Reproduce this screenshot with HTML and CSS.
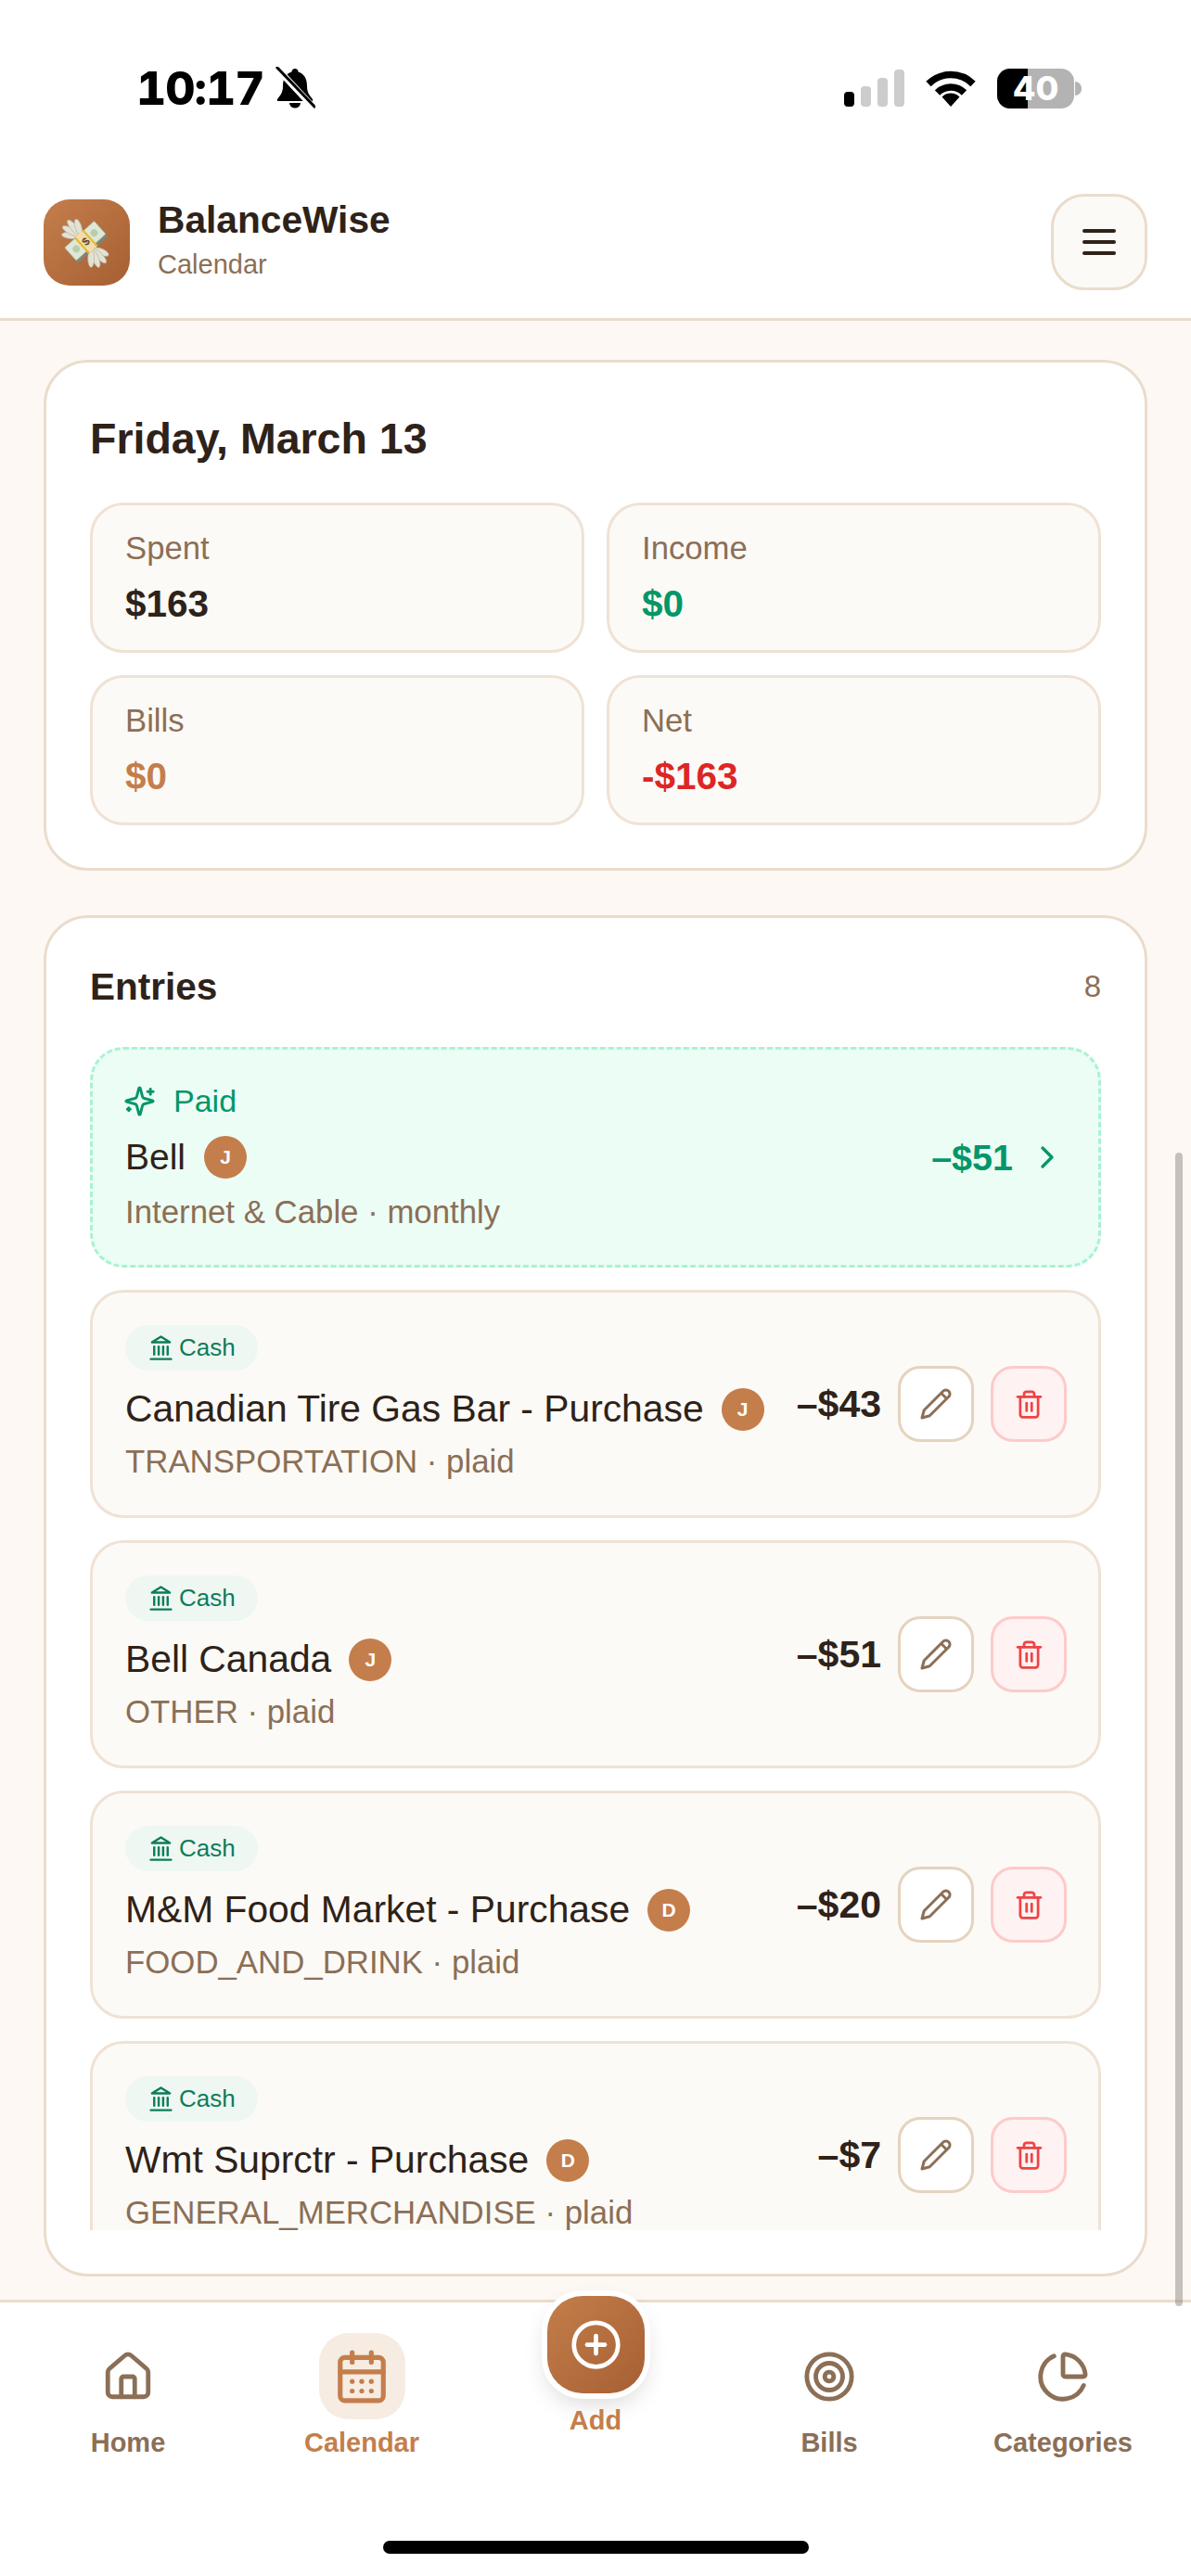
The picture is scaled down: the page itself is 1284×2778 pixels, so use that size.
FILE: index.html
```html
<!DOCTYPE html>
<html lang="en">
<head>
  <meta charset="UTF-8" />
  <meta name="viewport" content="width=device-width, initial-scale=1.0"/>
  <title>BalanceWise Calendar</title>
  <link rel="stylesheet" href="styles.css">
</head>
<body>
  <svg class="defs" width="0" height="0" aria-hidden="true">
    <symbol id="i-bank" viewBox="0 0 24 24">
      <line x1="3" y1="22" x2="21" y2="22"/>
      <line x1="6" y1="18" x2="6" y2="11"/>
      <line x1="10" y1="18" x2="10" y2="11"/>
      <line x1="14" y1="18" x2="14" y2="11"/>
      <line x1="18" y1="18" x2="18" y2="11"/>
      <polygon points="12 2 20 7 4 7"/>
    </symbol>
    <symbol id="i-pencil" viewBox="0 0 24 24">
      <path d="M17 3a2.85 2.83 0 1 1 4 4L7.5 20.5 2 22l1.5-5.5Z"/>
      <path d="m16 4.500 3.500 3.500"/>
    </symbol>
    <symbol id="i-trash" viewBox="0 0 24 24">
      <path d="M3 6h18"/>
      <path d="M19 6v14a2 2 0 0 1-2 2H7a2 2 0 0 1-2-2V6"/>
      <path d="M8 6V4a2 2 0 0 1 2-2h4a2 2 0 0 1 2 2v2"/>
      <line x1="10" y1="11" x2="10" y2="17"/>
      <line x1="14" y1="11" x2="14" y2="17"/>
    </symbol>
  </svg>

  <div class="app">
    <div class="status">
      <div class="status-left">
        <span class="time">10:17</span>
        <svg class="bell" viewBox="0 0 44 46">
          <path d="M22 2c-2 0-3.500 1.500-3.500 3.500C11 8 9 14 9 21c0 7-3 10-6 14v2h38v-2c-3-4-6-7-6-14 0-7-2-13-9.500-15.500C25.500 3.500 24 2 22 2z"/>
          <path d="M16 39h12a6 5.500 0 0 1-12 0z"/>
          <line class="slash-gap" x1="1" y1="0" x2="43" y2="45"/>
          <line class="slash" x1="2" y1="0" x2="44" y2="44"/>
        </svg>
      </div>
      <div class="status-right">
        <div class="signal">
          <i class="on bar1"></i><i class="bar2"></i><i class="bar3"></i><i class="bar4"></i>
        </div>
        <svg class="wifi" viewBox="0 0 56 40">
          <path d="M4 15.500a34 34 0 0 1 48 0"/>
          <path d="M13.500 25a20.500 20.500 0 0 1 29 0"/>
          <path class="wifi-dot" d="M18.500 29.500a13.500 13.500 0 0 1 19 0L28 40z"/>
        </svg>
        <div class="battery"><span class="battery-fill"></span><span class="battery-num">40</span></div>
        <span class="battery-tip"></span>
      </div>
    </div>

    <header class="topbar">
      <div class="brand">
        <div class="logo">
          <svg viewBox="0 0 93 93" width="93" height="93">
            <g transform="translate(46 46) scale(0.86) rotate(-42) translate(-45 -45)">
              <g class="feathers">
                <ellipse cx="45" cy="22" rx="4" ry="11" transform="rotate(-42 45 36)"/>
                <ellipse cx="45" cy="21" rx="4" ry="12" transform="rotate(-20 45 36)"/>
                <ellipse cx="45" cy="21" rx="4" ry="12" transform="rotate(2 45 36)"/>
                <ellipse cx="45" cy="23" rx="4" ry="10" transform="rotate(24 45 36)"/>
                <ellipse cx="45" cy="68" rx="4" ry="10" transform="rotate(-24 45 54)"/>
                <ellipse cx="45" cy="69" rx="4" ry="12" transform="rotate(-2 45 54)"/>
                <ellipse cx="45" cy="69" rx="4" ry="12" transform="rotate(20 45 54)"/>
                <ellipse cx="45" cy="68" rx="4" ry="11" transform="rotate(42 45 54)"/>
              </g>
              <rect x="20" y="35" width="50" height="23" rx="1.500" fill="#7f8478"/>
              <rect x="20" y="32" width="50" height="22" rx="1.500" fill="#dfe8d4" stroke="#9aa890" stroke-width="1"/>
              <circle cx="30" cy="43" r="4.500" fill="#b9cdb0"/>
              <circle cx="60" cy="43" r="4.500" fill="#b9cdb0"/>
              <rect x="37" y="31" width="16" height="27" fill="#e8b92f"/>
              <rect x="39.500" y="31" width="11" height="27" fill="#f1ddb0"/>
              <text class="logo-dollar" x="45" y="49">$</text>
            </g>
          </svg>
        </div>
        <div class="brand-text">
          <div class="brand-name">BalanceWise</div>
          <div class="brand-page">Calendar</div>
        </div>
      </div>
      <button class="menu-btn">
        <svg class="line-icon" viewBox="0 0 24 24" width="48" height="48">
          <line x1="4" y1="6" x2="20" y2="6"/>
          <line x1="4" y1="12" x2="20" y2="12"/>
          <line x1="4" y1="18" x2="20" y2="18"/>
        </svg>
      </button>
    </header>

    <main class="content">
      <section class="card day-card">
        <h2 class="day-title">Friday, March 13</h2>
        <div class="stats">
          <div class="stat"><div class="stat-label">Spent</div><div class="stat-value">$163</div></div>
          <div class="stat"><div class="stat-label">Income</div><div class="stat-value green">$0</div></div>
          <div class="stat"><div class="stat-label">Bills</div><div class="stat-value accent">$0</div></div>
          <div class="stat"><div class="stat-label">Net</div><div class="stat-value red">-$163</div></div>
        </div>
      </section>

      <section class="card entries-card">
        <div class="entries-head">
          <h3 class="entries-title">Entries</h3>
          <span class="entries-count">8</span>
        </div>
        <div class="entries-list">
          <div class="entry paid">
            <div class="entry-info">
              <div class="paid-tag">
                <svg class="line-icon" viewBox="0 0 24 24" width="35" height="35">
                  <path d="M9.937 15.500A2 2 0 0 0 8.500 14.063l-6.135-1.582a.500.500 0 0 1 0-.962L8.500 9.936A2 2 0 0 0 9.937 8.500l1.582-6.135a.500.500 0 0 1 .963 0L14.063 8.500A2 2 0 0 0 15.500 9.937l6.135 1.581a.500.500 0 0 1 0 .964L15.500 14.063a2 2 0 0 0-1.437 1.437l-1.582 6.135a.500.500 0 0 1-.963 0z"/>
                  <path d="M20 3v4"/><path d="M22 5h-4"/><path d="M4 17v2"/><path d="M5 18H3"/>
                </svg>
                Paid
              </div>
              <div class="entry-name">Bell <span class="avatar">J</span></div>
              <div class="entry-sub">Internet &amp; Cable · monthly</div>
            </div>
            <div class="entry-amount green">–$51</div>
            <svg class="line-icon chevron" viewBox="0 0 24 24" width="40" height="40"><path d="m9 18 6-6-6-6"/></svg>
          </div>

          <div class="entry">
            <div class="entry-info">
              <span class="pill"><svg class="line-icon" width="29" height="29"><use href="#i-bank"/></svg>Cash</span>
              <div class="entry-name">Canadian Tire Gas Bar - Purchase <span class="avatar">J</span></div>
              <div class="entry-sub">TRANSPORTATION · plaid</div>
            </div>
            <div class="entry-amount">–$43</div>
            <button class="act-btn"><svg class="line-icon" width="36" height="36"><use href="#i-pencil"/></svg></button>
            <button class="act-btn danger"><svg class="line-icon" width="33" height="33"><use href="#i-trash"/></svg></button>
          </div>

          <div class="entry">
            <div class="entry-info">
              <span class="pill"><svg class="line-icon" width="29" height="29"><use href="#i-bank"/></svg>Cash</span>
              <div class="entry-name">Bell Canada <span class="avatar">J</span></div>
              <div class="entry-sub">OTHER · plaid</div>
            </div>
            <div class="entry-amount">–$51</div>
            <button class="act-btn"><svg class="line-icon" width="36" height="36"><use href="#i-pencil"/></svg></button>
            <button class="act-btn danger"><svg class="line-icon" width="33" height="33"><use href="#i-trash"/></svg></button>
          </div>

          <div class="entry">
            <div class="entry-info">
              <span class="pill"><svg class="line-icon" width="29" height="29"><use href="#i-bank"/></svg>Cash</span>
              <div class="entry-name">M&amp;M Food Market - Purchase <span class="avatar">D</span></div>
              <div class="entry-sub">FOOD_AND_DRINK · plaid</div>
            </div>
            <div class="entry-amount">–$20</div>
            <button class="act-btn"><svg class="line-icon" width="36" height="36"><use href="#i-pencil"/></svg></button>
            <button class="act-btn danger"><svg class="line-icon" width="33" height="33"><use href="#i-trash"/></svg></button>
          </div>

          <div class="entry">
            <div class="entry-info">
              <span class="pill"><svg class="line-icon" width="29" height="29"><use href="#i-bank"/></svg>Cash</span>
              <div class="entry-name">Wmt Suprctr - Purchase <span class="avatar">D</span></div>
              <div class="entry-sub">GENERAL_MERCHANDISE · plaid</div>
            </div>
            <div class="entry-amount">–$7</div>
            <button class="act-btn"><svg class="line-icon" width="36" height="36"><use href="#i-pencil"/></svg></button>
            <button class="act-btn danger"><svg class="line-icon" width="33" height="33"><use href="#i-trash"/></svg></button>
          </div>
        </div>
      </section>
    </main>

    <nav class="tabbar">
      <a class="tab">
        <span class="tab-icon">
          <svg class="line-icon" viewBox="0 0 24 24" width="58" height="58">
            <path d="M15 21v-8a1 1 0 0 0-1-1h-4a1 1 0 0 0-1 1v8"/>
            <path d="M3 10a2 2 0 0 1 .709-1.528l7-5.999a2 2 0 0 1 2.582 0l7 5.999A2 2 0 0 1 21 10v9a2 2 0 0 1-2 2H5a2 2 0 0 1-2-2z"/>
          </svg>
        </span>
        Home
      </a>
      <a class="tab active">
        <span class="tab-icon">
          <svg class="line-icon" viewBox="0 0 24 24" width="62" height="62">
            <path d="M8 2v4"/><path d="M16 2v4"/>
            <rect width="18" height="18" x="3" y="4" rx="2"/>
            <path d="M3 10h18"/>
            <path d="M8 14h.01"/><path d="M12 14h.01"/><path d="M16 14h.01"/>
            <path d="M8 18h.01"/><path d="M12 18h.01"/><path d="M16 18h.01"/>
          </svg>
        </span>
        Calendar
      </a>
      <a class="tab add">
        <span class="add-btn">
          <svg class="line-icon" viewBox="0 0 24 24" width="57" height="57">
            <circle cx="12" cy="12" r="10"/>
            <path d="M8 12h8"/><path d="M12 8v8"/>
          </svg>
        </span>
        Add
      </a>
      <a class="tab">
        <span class="tab-icon">
          <svg class="line-icon" viewBox="0 0 24 24" width="58" height="58">
            <circle cx="12" cy="12" r="10"/>
            <circle cx="12" cy="12" r="6"/>
            <circle cx="12" cy="12" r="2"/>
          </svg>
        </span>
        Bills
      </a>
      <a class="tab">
        <span class="tab-icon">
          <svg class="line-icon" viewBox="0 0 24 24" width="58" height="58">
            <path d="M21 12c.552 0 1.005-.449.950-.998a10 10 0 0 0-8.953-8.951c-.550-.055-.998.398-.998.950v8a1 1 0 0 0 1 1z"/>
            <path d="M21.210 15.890A10 10 0 1 1 8 2.830"/>
          </svg>
        </span>
        Categories
      </a>
    </nav>

    <div class="home-bar"></div>
    <div class="scroll-thumb"></div>
  </div>
</body>
</html>
```

FILE: styles.css
```css
* {
  box-sizing: border-box;
}

body {
  margin: 0;
  font-family: "Liberation Sans", Arial, sans-serif;
  color: #2e2219;
  background: #fff;
}

h2, h3 {
  margin: 0;
}

.defs {
  position: absolute;
}

.app {
  position: relative;
  display: flex;
  flex-direction: column;
  height: 100vh;
  overflow: hidden;
}

.line-icon {
  fill: none;
  stroke: currentColor;
  stroke-width: 2;
  stroke-linecap: round;
  stroke-linejoin: round;
  flex: none;
}

.green { color: #059669; }
.accent { color: #c47e4b; }
.red { color: #dc2626; }

/* status bar */
.status {
  flex: none;
  height: 190px;
  padding: 0 118px 0 147px;
  display: flex;
  justify-content: space-between;
  align-items: center;
}

.status-left, .status-right {
  display: flex;
  align-items: center;
}

.time {
  font-family: Inter, sans-serif;
  font-weight: 800;
  font-size: 50px;
  font-variant-numeric: tabular-nums;
  letter-spacing: -1px;
  color: #000;
}

.bell {
  width: 44px;
  height: 46px;
  margin-left: 11px;
  fill: #000;
}

.slash-gap {
  stroke: #fff;
  stroke-width: 7;
}

.slash {
  stroke: #000;
  stroke-width: 3;
}

.signal {
  display: flex;
  align-items: flex-end;
  gap: 7px;
  height: 40px;
}

.signal i {
  width: 11px;
  border-radius: 4px;
  background: #ccc;
}

.signal .on { background: #000; }
.bar1 { height: 16px; }
.bar2 { height: 22px; }
.bar3 { height: 31px; }
.bar4 { height: 40px; }

.wifi {
  width: 56px;
  height: 40px;
  margin-left: 22px;
  fill: none;
  stroke: #000;
  stroke-width: 7.5;
}

.wifi-dot {
  fill: #000;
  stroke: none;
}

.battery {
  position: relative;
  width: 83px;
  height: 43px;
  margin-left: 22px;
  border-radius: 14px;
  background: #b3b3b3;
  overflow: hidden;
  text-align: center;
}

.battery-fill {
  position: absolute;
  left: 0;
  top: 0;
  bottom: 0;
  width: 33px;
  background: #000;
}

.battery-num {
  position: relative;
  font-family: Inter, sans-serif;
  font-weight: 800;
  font-size: 36px;
  line-height: 43px;
  color: #fff;
}

.battery-tip {
  width: 7px;
  height: 15px;
  margin-left: 1px;
  border-radius: 0 8px 8px 0;
  background: #b3b3b3;
}

/* header */
.topbar {
  flex: none;
  display: flex;
  justify-content: space-between;
  align-items: center;
  padding: 19px 47px 30px;
  background: #fff;
  border-bottom: 3px solid #eadccc;
}

.brand {
  display: flex;
  align-items: center;
  gap: 30px;
}

.logo {
  width: 93px;
  height: 93px;
  border-radius: 28px;
  background: linear-gradient(135deg, #c47e4b, #a65f33);
}

.feathers {
  fill: #e4e2d4;
  stroke: #b5b3a0;
  stroke-width: 0.8;
}

.logo-dollar {
  font-size: 14px;
  font-weight: 700;
  text-anchor: middle;
  fill: #5d4a1c;
}

.brand-text {
  padding-bottom: 8px;
}

.brand-name {
  font-size: 40.7px;
  font-weight: 700;
  line-height: 50px;
}

.brand-page {
  margin-top: 6px;
  font-size: 29px;
  line-height: 34px;
  color: #8b6f56;
}

.menu-btn {
  width: 104px;
  height: 104px;
  padding: 0;
  display: flex;
  align-items: center;
  justify-content: center;
  color: #2e2219;
  background: #fcfaf6;
  border: 3px solid #eadccc;
  border-radius: 36px;
}

/* content */
.content {
  flex: 1;
  min-height: 0;
  display: flex;
  flex-direction: column;
  gap: 48px;
  padding: 42px 47px 25px;
  background: #fdf8f3;
}

.card {
  background: #fff;
  border: 3px solid #eadccc;
  border-radius: 48px;
}

.day-card {
  flex: none;
  padding: 55px 47px 46px;
}

.day-title {
  font-size: 46.5px;
  line-height: 54px;
  font-weight: 700;
}

.stats {
  display: grid;
  grid-template-columns: 1fr 1fr;
  gap: 24px;
  margin-top: 42px;
}

.stat {
  height: 162px;
  padding: 26px 35px;
  background: #fcfaf6;
  border: 3px solid #efe2d5;
  border-radius: 36px;
}

.stat-label {
  font-size: 34.7px;
  line-height: 40px;
  color: #8b6f56;
}

.stat-value {
  margin-top: 17px;
  font-size: 40.5px;
  line-height: 46px;
  font-weight: 700;
}

.entries-card {
  flex: 1;
  min-height: 0;
  display: flex;
  flex-direction: column;
  padding: 47px 47px 47px;
}

.entries-head {
  flex: none;
  display: flex;
  justify-content: space-between;
  align-items: center;
  height: 54px;
}

.entries-title {
  font-size: 40.5px;
  font-weight: 700;
}

.entries-count {
  font-size: 33px;
  color: #8b6f56;
}

.entries-list {
  flex: 1;
  min-height: 0;
  overflow: hidden;
  display: flex;
  flex-direction: column;
  gap: 24px;
  margin-top: 38px;
}

.entry {
  flex: none;
  display: flex;
  align-items: center;
  height: 246px;
  padding: 0 34px 0 35px;
  background: #fcfaf6;
  border: 3px solid #efe2d5;
  border-radius: 36px;
}

.entry.paid {
  height: 238px;
  padding-right: 35px;
  background: #ecfdf5;
  border: 3px dashed #a7f3d0;
}

.entry-info {
  flex: 1;
  min-width: 0;
  padding-bottom: 3px;
}

.paid .entry-info {
  padding-bottom: 0;
}

.paid-tag {
  display: flex;
  align-items: center;
  gap: 19px;
  height: 38px;
  font-size: 34px;
  color: #059669;
}

.paid-tag svg {
  margin-left: -2px;
}

.pill {
  display: inline-flex;
  align-items: center;
  gap: 5px;
  height: 49px;
  padding: 0 24px;
  font-size: 26px;
  color: #0c7d5a;
  background: #eff7f2;
  border-radius: 25px;
}

.entry-name {
  display: flex;
  align-items: center;
  gap: 19px;
  margin-top: 19px;
  height: 46px;
  font-size: 40.8px;
  white-space: nowrap;
}

.paid .entry-name {
  gap: 20px;
  margin-top: 18px;
  font-size: 39px;
}

.avatar {
  flex: none;
  width: 46px;
  height: 46px;
  display: flex;
  align-items: center;
  justify-content: center;
  border-radius: 50%;
  font-size: 21px;
  font-weight: 700;
  color: #fff;
  background: #c47e4b;
}

.entry-sub {
  margin-top: 12px;
  font-size: 34.8px;
  line-height: 42px;
  color: #8b6f56;
}

.paid .entry-sub {
  margin-top: 15px;
}

.entry-amount {
  flex: none;
  font-size: 41px;
  font-weight: 700;
}

.paid .entry-amount {
  font-size: 39.5px;
}

.chevron {
  margin-left: 17px;
  color: #059669;
}

.act-btn {
  flex: none;
  width: 82px;
  height: 82px;
  padding: 0;
  margin-left: 18px;
  display: flex;
  align-items: center;
  justify-content: center;
  color: #8b6f56;
  background: #fff;
  border: 3px solid #e5d3bf;
  border-radius: 24px;
}

.act-btn.danger {
  color: #ef4444;
  background: #fef2f2;
  border-color: #fecaca;
}

/* bottom tabs */
.tabbar {
  flex: none;
  position: relative;
  height: 298px;
  padding: 33px 12px 0;
  display: grid;
  grid-template-columns: repeat(5, 1fr);
  background: #fff;
  border-top: 3px solid #eadccc;
}

.tab {
  display: flex;
  flex-direction: column;
  align-items: center;
  font-size: 29px;
  line-height: 34px;
  font-weight: 700;
  color: #8b6f56;
}

.tab-icon {
  width: 93px;
  height: 93px;
  margin-bottom: 8px;
  display: flex;
  align-items: center;
  justify-content: center;
  border-radius: 32px;
}

.tab.active, .tab.add {
  color: #c47e4b;
}

.tab.active .tab-icon {
  background: #f6ece2;
}

.add-btn {
  width: 105px;
  height: 105px;
  margin-top: -40px;
  margin-bottom: 12px;
  display: flex;
  align-items: center;
  justify-content: center;
  color: #fff;
  border-radius: 38px;
  background: linear-gradient(135deg, #c47e4b, #a65f33);
  box-shadow: 0 0 0 6px #fff, 0 10px 24px rgba(46, 34, 25, 0.18);
}

.home-bar {
  position: absolute;
  left: 413px;
  bottom: 24px;
  width: 459px;
  height: 14px;
  border-radius: 7px;
  background: #000;
}

.scroll-thumb {
  position: absolute;
  top: 1243px;
  right: 9px;
  width: 8px;
  height: 1244px;
  border-radius: 4px;
  background: rgba(120, 116, 108, 0.42);
}
```
